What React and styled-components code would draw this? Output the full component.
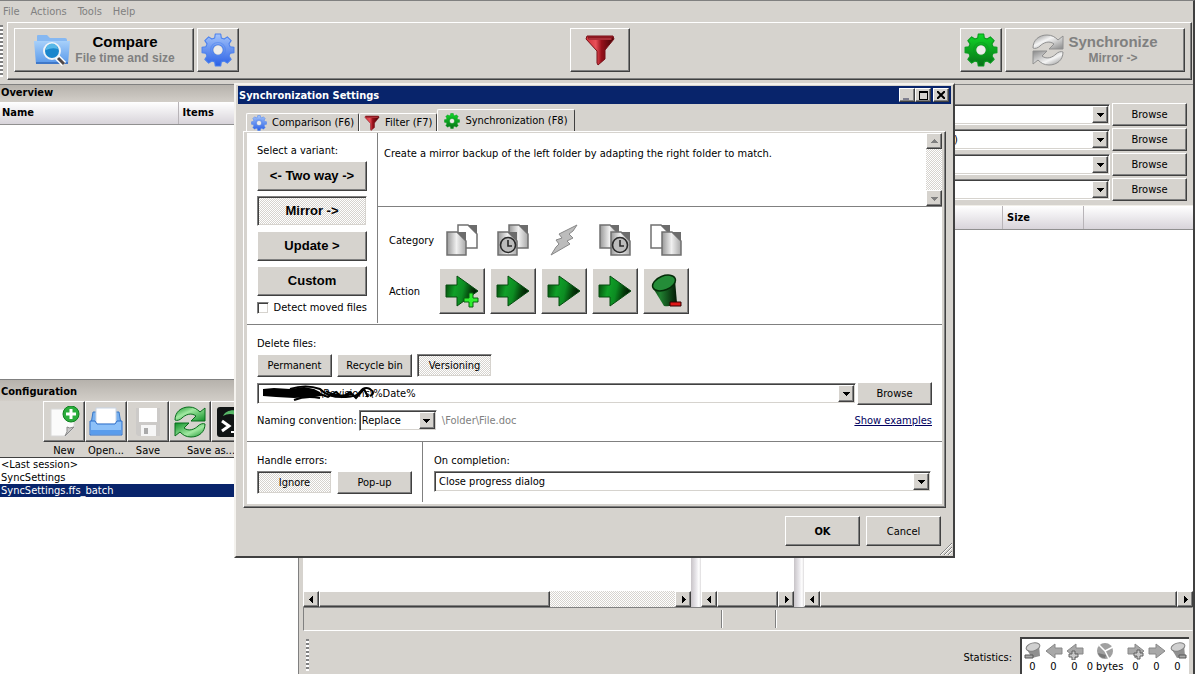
import { useId, useState } from "react";
import styled, { createGlobalStyle, css } from "styled-components";

const theme = {
  face: "#d6d3ce",
  shadow: "#808080",
  dark: "#404040",
  light: "#ffffff",
  navy: "#08246b",
  muted: "#808080",
  ui: '"DejaVu Sans Condensed", "DejaVu Sans", sans-serif',
  heading: '"Liberation Sans", Arial, sans-serif',
};

const GlobalStyle = createGlobalStyle`
  * {
    box-sizing: border-box;
  }
  body {
    margin: 0;
    overflow: hidden;
    background: ${theme.face};
    color: #000;
    font: 11px/13px ${theme.ui};
  }
  button, input, select {
    font: inherit;
    color: inherit;
  }
`;

const raised = css`
  border: 1px solid;
  border-color: ${theme.light} ${theme.dark} ${theme.dark} ${theme.light};
  box-shadow: inset -1px -1px 0 ${theme.shadow};
`;

const sunken = css`
  border: 1px solid;
  border-color: ${theme.shadow} ${theme.light} ${theme.light} ${theme.shadow};
  box-shadow: inset 1px 1px 0 ${theme.dark}, inset -1px -1px 0 ${theme.face};
`;

const checker = css`
  background: repeating-conic-gradient(#fff 0% 25%, ${theme.face} 0% 50%) 0 0 /
    2px 2px;
`;

const Window = styled.div`
  position: relative;
  display: flex;
  flex-direction: column;
  height: 100vh;
  border-top: 1px solid ${theme.shadow};
  border-right: 2px solid ${theme.dark};
`;

const MenuBar = styled.nav`
  display: flex;
  gap: 11px;
  height: 21px;
  padding: 3px;
`;

const MenuItem = styled.button`
  padding: 0;
  border: 0;
  background: none;
  color: ${theme.muted};
`;

const ToolbarRow = styled.div`
  display: flex;
  gap: 4px;
  padding-right: 1px;
`;

const Grip = styled.div`
  width: 3px;
  margin: 3px 0;
  background: repeating-linear-gradient(
    ${theme.shadow} 0 2px,
    ${theme.light} 2px 4px
  );
`;

const Toolbar = styled.div`
  flex: 1;
  display: flex;
  justify-content: space-between;
  padding: 5px 6px 7px 6px;
  ${raised}
`;

const ToolGroup = styled.div`
  display: flex;
  gap: 3px;
`;

const Button = styled.button`
  display: flex;
  align-items: center;
  justify-content: center;
  gap: 4px;
  width: ${(p) => p.$width || 75}px;
  height: ${(p) => p.$height || 23}px;
  padding: 0;
  background: ${theme.face};
  font-weight: ${(p) => (p.$bold ? "bold" : "normal")};
  ${raised}
  ${(p) =>
    p.$pressed &&
    css`
      ${checker}
      ${sunken}
    `}
`;

const VariantButton = styled(Button)`
  width: 100%;
  height: 30px;
  font: bold 13px/16px ${theme.heading};
`;

const ToolText = styled.span`
  display: flex;
  flex-direction: column;
  font: bold 12px/16px ${theme.heading};
  color: ${theme.muted};
`;

const ToolTitle = styled.span`
  font-size: 15px;
  color: ${(p) => (p.$muted ? theme.muted : "#000")};
`;

const Body = styled.div`
  flex: 1;
  display: flex;
  min-height: 0;
  padding-top: 4px;
`;

const Sidebar = styled.aside`
  display: flex;
  flex-direction: column;
  width: 299px;
  flex-shrink: 0;
  border-right: 1px solid ${theme.shadow};
`;

const Pane = styled.section`
  flex: 1;
  display: flex;
  flex-direction: column;
  border-top: 1px solid ${theme.shadow};
  background: #fff;
`;

const PaneTitle = styled.h2`
  margin: 0;
  padding: ${(p) => (p.$tall ? "5px 1px 3px" : "1px 1px 3px")};
  font-size: 11px;
  line-height: 13px;
  background: linear-gradient(#b6b2ac, #d2cec8);
`;

const headerCell = css`
  background: linear-gradient(#fff, #d8d4da);
  border-bottom: 1px solid #909090;
  font-weight: bold;
`;

const OverviewTable = styled.table`
  width: 100%;
  table-layout: fixed;
  border-collapse: collapse;
  th {
    ${headerCell}
    height: 22px;
    padding: 0 2px;
    text-align: left;
  }
  th + th {
    width: 120px;
    padding-left: 4px;
    border-left: 1px solid #b8b4b8;
  }
`;

const ConfigBar = styled.div`
  display: flex;
  padding-left: 43px;
  background: ${theme.face};
  border-bottom: 1px solid ${theme.dark};
`;

const ConfigItem = styled.div`
  display: flex;
  flex-wrap: wrap;
  justify-content: center;
  width: ${(p) => (p.$wide ? 84 : 42)}px;
`;

const ConfigLabel = styled.span`
  margin: 2px 0 0;
`;

const ConfigList = styled.ul`
  margin: 0;
  padding: 0;
  list-style: none;
`;

const ConfigEntry = styled.li`
  padding-left: 1px;
  line-height: 13px;
  color: ${(p) => (p.$selected ? "#fff" : "#000")};
  background: ${(p) => (p.$selected ? theme.navy : "transparent")};
`;

const Main = styled.main`
  flex: 1;
  display: flex;
  flex-direction: column;
  min-width: 0;
  margin-left: 4px;
  border-top: 1px solid ${theme.shadow};
`;

const FolderRows = styled.div`
  display: flex;
  flex-direction: column;
  gap: 2px;
  padding: 18px 6px 4px 501px;
  border-bottom: 1px solid #f0eee8;
`;

const FolderRow = styled.div`
  display: flex;
  align-items: center;
  gap: 2px;
`;

const Grids = styled.div`
  flex: 1;
  display: flex;
`;

const Grid = styled.div`
  display: flex;
  flex-direction: column;
  flex: ${(p) => p.$flex};
  background: #fff;
`;

const GridHeader = styled.div`
  ${headerCell}
  display: grid;
  grid-template-columns: 1fr 81px 109px;
  height: 24px;
  line-height: 23px;
`;

const GridHeaderCell = styled.div`
  padding-left: 4px;
  border-right: 1px solid #b8b4b8;
  &:last-child {
    border: 0;
  }
`;

const Splitter = styled.div`
  width: 10px;
  background: linear-gradient(90deg, #c8c4c8, #e8e6ea 50%, #fff 80%, #dcdadc);
`;

const ScrollRow = styled.div`
  display: flex;
  height: 16px;
  margin-top: auto;
  ${checker}
`;

const ScrollButton = styled.button`
  display: grid;
  place-items: center;
  width: 16px;
  height: 16px;
  padding: 0;
  background: ${theme.face};
  ${raised}
`;

const ScrollThumb = styled.div`
  width: ${(p) => p.$width};
  background: ${theme.face};
  ${raised}
`;

const ScrollTrack = styled.div`
  flex: 1;
  display: flex;
`;

const StatusBar = styled.div`
  display: grid;
  grid-template-columns: 418px 54px 1fr;
  height: 24px;
  padding: 2px 0;
  border: 1px solid;
  border-color: ${theme.shadow} ${theme.face} ${theme.light} ${theme.shadow};
`;

const StatusCell = styled.div`
  border-right: 1px solid ${theme.shadow};
  box-shadow: 1px 0 0 #fff;
  &:last-child {
    border: 0;
    box-shadow: none;
  }
`;

const BottomBar = styled.div`
  display: flex;
  height: 43px;
  padding: 5px 3px 0;
`;

const StatsLabel = styled.span`
  margin: 15px 7px 0 auto;
`;

const Stats = styled.div`
  display: flex;
  padding: 5px 1px 0 2px;
  background: #fff;
  border: 1px solid ${theme.face};
  border-bottom: 0;
  box-shadow: inset 2px 2px 0 ${theme.dark};
`;

const Stat = styled.div`
  display: flex;
  flex-direction: column;
  align-items: center;
  width: ${(p) => (p.$wide ? 40 : 21)}px;
  white-space: nowrap;
`;

const Dialog = styled.div`
  position: absolute;
  top: 82px;
  left: 234px;
  right: 238px;
  padding: 1px 2px 10px;
  background: ${theme.face};
  border: 2px solid;
  border-color: #f4f2ee ${theme.dark} ${theme.dark} #f4f2ee;
`;

const TitleBar = styled.header`
  display: flex;
  align-items: center;
  height: 18px;
  padding: 0 2px 0 1px;
  color: #fff;
  background: ${theme.navy};
`;

const DialogTitle = styled.h1`
  flex: 1;
  margin: 0;
  font-size: 11px;
  line-height: 13px;
`;

const CaptionButton = styled(ScrollButton)`
  height: 14px;
  &:last-child {
    margin-left: 2px;
  }
`;

const Tabs = styled.div`
  display: flex;
  align-items: flex-end;
  height: 22px;
  margin: 5px 5px 0;
  padding-left: 3px;
`;

const Tab = styled.button`
  display: flex;
  align-items: center;
  gap: 5px;
  height: ${(p) => (p.$selected ? 22 : 18)}px;
  padding: 0 ${(p) => (p.$selected ? 6 : 4)}px;
  background: ${theme.face};
  border: 1px solid;
  border-color: ${theme.light} ${theme.dark} transparent ${theme.light};
  border-bottom: 0;
  border-radius: 2px 2px 0 0;
`;

const TabPanel = styled.div`
  margin: 0 5px;
  padding: 1px 3px 3px;
  ${raised}
`;

const PanelSurface = styled.div`
  background: #fff;
`;

const VariantSection = styled.section`
  display: flex;
  padding-bottom: 1px;
  border-bottom: 1px solid ${theme.shadow};
`;

const VariantColumn = styled.div`
  width: 131px;
  padding: 11px 10px 9px;
  border-right: 1px solid ${theme.shadow};
`;

const VariantList = styled.div`
  display: flex;
  flex-direction: column;
  gap: 5px;
  margin: 4px 0 5px;
`;

const CheckLabel = styled.label`
  display: flex;
  align-items: center;
  gap: 5px;
  white-space: nowrap;
`;

const Checkbox = styled.input`
  appearance: none;
  width: 12px;
  height: 12px;
  margin: 0;
  background: #fff;
  ${sunken}
  &:checked {
    background: #000;
  }
`;

const RuleColumn = styled.div`
  flex: 1;
`;

const Description = styled.div`
  display: flex;
  justify-content: space-between;
  height: 74px;
  padding-left: 6px;
  border-bottom: 1px solid ${theme.shadow};
  p {
    margin: 14px 0 0;
  }
`;

const VerticalScroll = styled.div`
  display: flex;
  flex-direction: column;
  justify-content: space-between;
  color: ${theme.shadow};
  ${checker}
`;

const RuleGrid = styled.div`
  display: grid;
  grid-template-columns: 45px repeat(5, 46px);
  grid-template-rows: 32px 46px;
  gap: 12px 5px;
  align-items: center;
  justify-items: center;
  padding: 17px 11px 0;
`;

const RuleLabel = styled.span`
  justify-self: start;
`;

const DeleteSection = styled.section`
  padding: 12px 10px 10px;
  border-bottom: 1px solid ${theme.shadow};
`;

const ButtonRow = styled.div`
  display: flex;
  gap: 5px;
  margin-top: 4px;
`;

const PathRow = styled.div`
  display: flex;
  align-items: center;
  gap: 1px;
  margin: 5px 0;
`;

const NamingRow = styled.div`
  display: flex;
  align-items: center;
  gap: 2px;
`;

const SamplePath = styled.span`
  margin-left: 3px;
  color: ${theme.muted};
`;

const Link = styled.a`
  margin-left: auto;
  color: #000060;
`;

const FinishSection = styled.section`
  display: flex;
`;

const ErrorColumn = styled.div`
  width: 176px;
  padding: 12px 10px 8px;
  border-right: 1px solid ${theme.shadow};
  margin-bottom: 2px;
`;

const CompletionColumn = styled.div`
  flex: 1;
  display: flex;
  flex-direction: column;
  gap: 4px;
  padding: 12px 11px 0;
`;

const DialogFooter = styled.footer`
  display: flex;
  justify-content: flex-end;
  gap: 6px;
  padding: 8px 10px 0;
`;

const ResizeGrip = styled.svg`
  position: absolute;
  right: 1px;
  bottom: 1px;
`;

const ComboFrame = styled.div`
  position: relative;
  display: flex;
  flex: ${(p) => (p.$width ? "none" : 1)};
  width: ${(p) => (p.$width ? `${p.$width}px` : "auto")};
  height: 21px;
  padding: 1px;
  background: #fff;
  ${sunken}
`;

const ComboInput = styled.input`
  flex: 1;
  min-width: 0;
  padding: 0 0 0 ${(p) => p.$indent || 2}px;
  border: 0;
  outline: 0;
  background: none;
`;

const ComboSelect = styled.select`
  flex: 1;
  min-width: 0;
  margin-right: -16px;
  padding: 0 16px 0 ${(p) => p.$indent || 1}px;
  border: 0;
  outline: 0;
  appearance: none;
  background: none;
`;

const ComboArrow = styled.span`
  display: grid;
  place-items: center;
  width: 16px;
  background: ${theme.face};
  pointer-events: none;
  ${raised}
`;

const Scribble = styled.svg`
  position: absolute;
  left: 4px;
  top: 0;
  pointer-events: none;
`;

const arrowPaths = {
  down: "M0 2h7L3.5 6z",
  up: "M0 5h7L3.5 1z",
  left: "M5 0v7L1 3.5z",
  right: "M2 0v7L6 3.5z",
};

const Arrow = ({ dir }) => (
  <svg width="7" height="7" fill="currentColor" shapeRendering="crispEdges">
    <path d={arrowPaths[dir]} />
  </svg>
);

const Combo = ({ label, value, indent, children }) => (
  <ComboFrame>
    <ComboInput aria-label={label} defaultValue={value} $indent={indent} />
    {children}
    <ComboArrow>
      <Arrow dir="down" />
    </ComboArrow>
  </ComboFrame>
);

const Select = ({ id, options, width, indent }) => (
  <ComboFrame $width={width}>
    <ComboSelect id={id} $indent={indent}>
      {options.map((option) => (
        <option key={option}>{option}</option>
      ))}
    </ComboSelect>
    <ComboArrow>
      <Arrow dir="down" />
    </ComboArrow>
  </ComboFrame>
);

const gearPoints = () => {
  const points = [];
  for (let i = 0; i < 8; i++) {
    const mid = (i * Math.PI) / 4;
    [
      [-0.27, 11.8],
      [-0.17, 15.2],
      [0.17, 15.2],
      [0.27, 11.8],
    ].forEach(([turn, radius]) => {
      const x = 16 + radius * Math.sin(mid + turn);
      const y = 16 - radius * Math.cos(mid + turn);
      points.push(`${x.toFixed(1)} ${y.toFixed(1)}`);
    });
  }
  return `M${points.join("L")}Z`;
};

const GearIcon = ({ size, from, to, edge }) => {
  const id = useId();
  return (
    <svg width={size} height={size} viewBox="0 0 32 32">
      <linearGradient id={id} x1="0" y1="0" x2="0" y2="1">
        <stop offset="0" stopColor={from} />
        <stop offset="1" stopColor={to} />
      </linearGradient>
      <path
        d={`${gearPoints()}M16 11a5 5 0 1 0 0 10a5 5 0 1 0 0-10z`}
        fill={`url(#${id})`}
        fillRule="evenodd"
        stroke={edge}
        strokeWidth="1"
        strokeLinejoin="round"
      />
      <circle cx="16" cy="16" r="7" fill="none" stroke={edge} opacity="0.5" />
      <circle cx="16" cy="16" r="4" fill="#f2f2f2" opacity="0.8" />
    </svg>
  );
};

const BlueGear = ({ size }) => (
  <GearIcon size={size} from="#a4c4fa" to="#2a60e6" edge="#4a80ee" />
);

const GreenGear = ({ size }) => (
  <GearIcon size={size} from="#10d828" to="#087018" edge="#079a1c" />
);

const FunnelIcon = ({ size }) => {
  const id = useId();
  return (
    <svg width={size} height={size} viewBox="0 0 32 32">
      <linearGradient id={id}>
        <stop offset="0" stopColor="#d03038" />
        <stop offset="0.35" stopColor="#e85058" />
        <stop offset="0.55" stopColor="#98101a" />
        <stop offset="1" stopColor="#400306" />
      </linearGradient>
      <path
        d="M3 2H29L30 5L21 16V25L14 31L13 29V17L2 5z"
        fill={`url(#${id})`}
        stroke="#781018"
      />
      <path d="M3 2H29L28 6H5z" fill="#8c1820" />
      <path d="M5 5H27" stroke="#c84850" />
    </svg>
  );
};

const FolderSearchIcon = () => (
  <svg width="38" height="32" viewBox="0 0 38 32">
    <linearGradient id="folder" x2="0" y2="1">
      <stop stopColor="#a8d0fa" />
      <stop offset="1" stopColor="#5898ea" />
    </linearGradient>
    <path d="M4 10V2q0-1 1-1h9l3 3h15q2 0 2 2v4z" fill="#86b8f2" />
    <path d="M1 7h36l-2 23H3z" fill="url(#folder)" />
    <path d="M3 29h32" stroke="#4078c8" strokeWidth="2" />
    <path d="M24 23l7 7" stroke="#fff" strokeWidth="6" />
    <path d="M25 24l6 6" stroke="#504848" strokeWidth="3" />
    <circle cx="19" cy="17" r="8" fill="#1a86cc" stroke="#f0f4f8" strokeWidth="2" />
    <path d="M13 16a6 6 0 0 1 12-1q-6-2-12 1z" fill="#58b8e8" />
  </svg>
);

const CycleIcon = ({ from, to, edge, size }) => {
  const id = useId();
  const half =
    "M1 14C1 6 7 1 15 1C20 1 23 3 26 6L31 2V15H17L22 10C17 6 11 9 8 12C6 14 3 15 1 14z";
  return (
    <svg width={size} height={size} viewBox="0 0 32 32">
      <linearGradient id={id} x2="1" y2="1">
        <stop stopColor={to} />
        <stop offset="0.4" stopColor={from} />
        <stop offset="1" stopColor={to} />
      </linearGradient>
      <g fill={`url(#${id})`} stroke={edge}>
        <path d={half} />
        <path d={half} transform="rotate(180 16 16)" />
      </g>
    </svg>
  );
};

const NewIcon = () => (
  <svg width="32" height="32" viewBox="0 0 32 32">
    <path d="M3 3h23v19l-8 8H3z" fill="#fbfbfb" stroke="#d8d8d8" />
    <path d="M26 21q-5 2-7 0q1 5-2 9z" fill="#c8c8c8" stroke="#888" />
    <circle cx="23" cy="8" r="8" fill="#2aae3c" stroke="#108020" />
    <path d="M23 3v10M18 8h10" stroke="#fff" strokeWidth="3" />
  </svg>
);

const OpenIcon = () => (
  <svg width="34" height="32" viewBox="0 0 34 32">
    <path d="M4 6h26l2 12H2z" fill="#78b0ee" stroke="#3878c8" />
    <path d="M7 2h20v16H7z" fill="#fff" stroke="#c8d4e4" />
    <path d="M1 15h5l2 3h18l2-3h5v14H1z" fill="#8cc0f8" stroke="#2e70cc" />
    <path d="M2 24h30v4H2z" fill="#5a9cec" />
  </svg>
);

const SaveIcon = () => (
  <svg width="32" height="32" viewBox="0 0 32 32">
    <path d="M4 2h24v28H6l-2-2z" fill="#cccac8" />
    <path d="M7 2h18v14H7z" fill="#fff" />
    <path d="M9 19h15v11H9z" fill="#f6f6f6" />
    <path d="M12 22h4v6h-4z" fill="#aaa" />
  </svg>
);

const BatchIcon = () => (
  <svg width="32" height="32" viewBox="0 0 32 32">
    <rect x="1" y="1" width="30" height="30" rx="3" fill="#101414" />
    <path d="M7 10C10 3 22 2 28 9L25 12C18 7 12 7 7 10z" fill="#58b868" />
    <path d="M6 15l7 5l-7 5" fill="none" stroke="#fff" strokeWidth="3" />
    <path d="M15 26h9" stroke="#fff" strokeWidth="2" />
  </svg>
);

const Sheet = ({ x, y, fill }) => (
  <g transform={`translate(${x} ${y})`}>
    <path d="M1 1h19v23H1z" fill="#8c8c8c" />
    <path d="M1 1h10l9 9v14H1z" fill={fill} stroke="#707070" strokeWidth="1.5" />
    <path d="M11 1h9v9z" fill="#6c6c6c" />
  </g>
);

// flip puts the highlighted sheet on the right
const SheetsIcon = ({ flip, clock }) => {
  const id = useId();
  const shade = `url(#${id})`;
  return (
    <svg width="32" height="32" viewBox="0 0 32 32">
      <linearGradient id={id}>
        <stop stopColor="#989898" />
        <stop offset="0.5" stopColor="#f0f0f0" />
        <stop offset="1" stopColor="#a8a8a8" />
      </linearGradient>
      <Sheet x={flip ? 0 : 11} y={0} fill={clock ? shade : "#fff"} />
      <Sheet x={flip ? 11 : 0} y={7} fill={shade} />
      {clock && (
        <g
          transform={flip ? "translate(21 21)" : "translate(11 21)"}
          fill="none"
          stroke="#282828"
          strokeWidth="1.6"
        >
          <circle r="7.5" fill="#bcbcbc" />
          <path d="M0-5V1H4" />
        </g>
      )}
    </svg>
  );
};

const BoltIcon = () => (
  <svg width="28" height="32" viewBox="0 0 28 32">
    <path
      d="M27 1L9 10l3 4l-6 2l3 4l-3 3L1 31l19-11l-3-3l6-3l-4-4l4-3z"
      fill="#bcbcbc"
      stroke="#888"
    />
  </svg>
);

const ArrowIcon = ({ plus }) => {
  const id = useId();
  return (
    <svg width="34" height="34" viewBox="0 0 34 34">
      <linearGradient id={id} x2="1" y2="0.2">
        <stop stopColor="#034008" />
        <stop offset="0.35" stopColor="#10a028" />
        <stop offset="0.6" stopColor="#0c8c22" />
        <stop offset="0.85" stopColor="#043c0a" />
        <stop offset="1" stopColor="#021c04" />
      </linearGradient>
      <path
        d="M1 11H12V2L33 17L12 32V23H1z"
        fill={`url(#${id})`}
        stroke="#064c10"
      />
      {plus && (
        <path
          d="M24 19h4v5h5v4h-5v5h-4v-5h-5v-4h5z"
          fill="#30f030"
          stroke="#086010"
        />
      )}
    </svg>
  );
};

const BinIcon = () => (
  <svg width="32" height="34" viewBox="0 0 32 34">
    <linearGradient id="bin">
      <stop stopColor="#0a4010" />
      <stop offset="0.3" stopColor="#208030" />
      <stop offset="1" stopColor="#021804" />
    </linearGradient>
    <path d="M3 14L14 32Q22 33 27 29L25 6z" fill="url(#bin)" />
    <ellipse
      cx="14"
      cy="9"
      rx="12"
      ry="7"
      transform="rotate(-22 14 9)"
      fill="#248c38"
      stroke="#042c08"
      strokeWidth="1.5"
    />
    <path d="M20 28h11v4H20z" fill="#e01818" stroke="#300" />
  </svg>
);

const SmallArrow = ({ flip, plus }) => (
  <svg width="18" height="18" viewBox="0 0 18 18">
    <path
      d="M1 6h7V2l9 7l-9 7v-4H1z"
      fill="#a8a8a8"
      stroke="#888"
      transform={flip ? "rotate(180 9 9)" : undefined}
    />
    {plus && (
      <path
        d="M6 9h3v3h3v3H9v3H6v-3H3v-3h3z"
        fill="#c8c8c8"
        stroke="#606060"
        transform={flip ? undefined : "translate(4 -1)"}
      />
    )}
  </svg>
);

const SmallBin = ({ flip }) => (
  <svg width="18" height="18" viewBox="0 0 18 18">
    <path d="M2 6L8 16L16 14L15 3z" fill="#909090" />
    <ellipse
      cx="9"
      cy="5"
      rx="7"
      ry="4"
      fill="#d0d0d0"
      stroke="#808080"
      transform="rotate(-15 9 5)"
    />
    <path
      d={flip ? "M10 13h7v3h-7z" : "M1 13h8v3H1z"}
      fill="#a8a8a8"
      stroke="#585858"
    />
  </svg>
);

const BytesIcon = () => (
  <svg width="18" height="18" viewBox="0 0 18 18">
    <circle cx="9" cy="9" r="8" fill="#a0a0a0" />
    <path d="M9 9L3 3M9 9L17 5M9 9L13 17" stroke="#fff" strokeWidth="1.5" />
    <path d="M2 11q1 5 7 5l1-3z" fill="#787878" />
  </svg>
);

const HorizontalScroll = ({ thumb }) => (
  <ScrollRow>
    <ScrollButton aria-label="Scroll left">
      <Arrow dir="left" />
    </ScrollButton>
    <ScrollTrack>
      <ScrollThumb $width={thumb} />
    </ScrollTrack>
    <ScrollButton aria-label="Scroll right">
      <Arrow dir="right" />
    </ScrollButton>
  </ScrollRow>
);

const stats = [
  { icon: <SmallBin />, text: "0" },
  { icon: <SmallArrow flip />, text: "0" },
  { icon: <SmallArrow flip plus />, text: "0" },
  { icon: <BytesIcon />, text: "0 bytes", wide: true },
  { icon: <SmallArrow plus />, text: "0" },
  { icon: <SmallArrow />, text: "0" },
  { icon: <SmallBin flip />, text: "0" },
];

const configItems = [
  { label: "New", icons: [<NewIcon key="new" />] },
  { label: "Open...", icons: [<OpenIcon key="open" />] },
  { label: "Save", icons: [<SaveIcon key="save" />] },
  {
    label: "Save as...",
    wide: true,
    icons: [
      <CycleIcon
        key="sync"
        size={32}
        from="#a0e8a0"
        to="#109028"
        edge="#086c1c"
      />,
      <BatchIcon key="batch" />,
    ],
  },
];

const variants = ["<- Two way ->", "Mirror ->", "Update >", "Custom"];
const deletionModes = ["Permanent", "Recycle bin", "Versioning"];
const errorModes = ["Ignore", "Pop-up"];
const actions = [
  { name: "Copy new item to right", icon: <ArrowIcon plus /> },
  { name: "Newer left to right", icon: <ArrowIcon /> },
  { name: "Conflict to right", icon: <ArrowIcon /> },
  { name: "Newer right overwritten", icon: <ArrowIcon /> },
  { name: "Delete right item", icon: <BinIcon /> },
];

const SettingsDialog = () => {
  const [variant, setVariant] = useState("Mirror ->");
  const [deletion, setDeletion] = useState("Versioning");
  const [errors, setErrors] = useState("Ignore");

  return (
    <Dialog role="dialog" aria-labelledby="dialog-title">
      <TitleBar>
        <DialogTitle id="dialog-title">Synchronization Settings</DialogTitle>
        <CaptionButton aria-label="Minimize">
          <svg width="10" height="9">
            <path d="M1 8h6" stroke="#808090" strokeWidth="2" />
          </svg>
        </CaptionButton>
        <CaptionButton aria-label="Maximize">
          <svg width="9" height="9" shapeRendering="crispEdges">
            <path d="M0 0h9v9H0zM1 2v6h7V2z" fillRule="evenodd" />
          </svg>
        </CaptionButton>
        <CaptionButton aria-label="Close">
          <svg width="8" height="8">
            <path d="M0 0l8 8M8 0l-8 8" stroke="#000" strokeWidth="2" />
          </svg>
        </CaptionButton>
      </TitleBar>
      <Tabs role="tablist">
        <Tab role="tab">
          <BlueGear size={16} />
          Comparison (F6)
        </Tab>
        <Tab role="tab">
          <FunnelIcon size={16} />
          Filter (F7)
        </Tab>
        <Tab role="tab" aria-selected="true" $selected>
          <GreenGear size={16} />
          Synchronization (F8)
        </Tab>
      </Tabs>
      <TabPanel>
        <PanelSurface>
          <VariantSection>
            <VariantColumn>
              <div>Select a variant:</div>
              <VariantList>
                {variants.map((name) => (
                  <VariantButton
                    key={name}
                    $pressed={name === variant}
                    onClick={() => setVariant(name)}
                  >
                    {name}
                  </VariantButton>
                ))}
              </VariantList>
              <CheckLabel>
                <Checkbox type="checkbox" />
                Detect moved files
              </CheckLabel>
            </VariantColumn>
            <RuleColumn>
              <Description>
                <p>
                  Create a mirror backup of the left folder by adapting the
                  right folder to match.
                </p>
                <VerticalScroll>
                  <ScrollButton aria-label="Scroll up">
                    <Arrow dir="up" />
                  </ScrollButton>
                  <ScrollButton aria-label="Scroll down">
                    <Arrow dir="down" />
                  </ScrollButton>
                </VerticalScroll>
              </Description>
              <RuleGrid>
                <RuleLabel>Category</RuleLabel>
                <SheetsIcon />
                <SheetsIcon clock />
                <BoltIcon />
                <SheetsIcon flip clock />
                <SheetsIcon flip />
                <RuleLabel>Action</RuleLabel>
                {actions.map(({ name, icon }) => (
                  <Button key={name} aria-label={name} $width={46} $height={46}>
                    {icon}
                  </Button>
                ))}
              </RuleGrid>
            </RuleColumn>
          </VariantSection>
          <DeleteSection>
            <div>Delete files:</div>
            <ButtonRow>
              {deletionModes.map((name) => (
                <Button
                  key={name}
                  $pressed={name === deletion}
                  onClick={() => setDeletion(name)}
                >
                  {name}
                </Button>
              ))}
            </ButtonRow>
            <PathRow>
              <Combo
                label="Versioning folder"
                value="\Revisions\%Date%"
                indent={61}
              >
                <Scribble width="114" height="18" viewBox="0 0 114 18">
                  <path
                    d="M1 5L12 4L28 5L42 3L52 5L58 8L60 12L48 13L32 14L14 13L1 12z"
                    fill="#000"
                  />
                  <path
                    d="M32 16Q44 11 58 14M28 5Q44 0 58 5Q66 14 84 13Q94 13 98 8Q102 2 108 5Q114 9 108 12M58 10L66 13L74 8L80 13L88 8L94 14L102 5L106 13M64 7Q76 14 90 10"
                    fill="none"
                    stroke="#000"
                    strokeWidth="2"
                  />
                </Scribble>
              </Combo>
              <Button>Browse</Button>
            </PathRow>
            <NamingRow>
              <label htmlFor="naming">Naming convention:</label>
              <Select
                id="naming"
                width={78}
                options={["Replace", "Time stamp"]}
              />
              <SamplePath>\Folder\File.doc</SamplePath>
              <Link href="#examples">Show examples</Link>
            </NamingRow>
          </DeleteSection>
          <FinishSection>
            <ErrorColumn>
              <div>Handle errors:</div>
              <ButtonRow>
                {errorModes.map((name) => (
                  <Button
                    key={name}
                    $pressed={name === errors}
                    onClick={() => setErrors(name)}
                  >
                    {name}
                  </Button>
                ))}
              </ButtonRow>
            </ErrorColumn>
            <CompletionColumn>
              <label htmlFor="completion">On completion:</label>
              <div>
                <Select
                  id="completion"
                  indent={3}
                  options={["Close progress dialog", "Shut down"]}
                />
              </div>
            </CompletionColumn>
          </FinishSection>
        </PanelSurface>
      </TabPanel>
      <DialogFooter>
        <Button $height={30} $bold>
          OK
        </Button>
        <Button $height={30}>Cancel</Button>
      </DialogFooter>
      <ResizeGrip width="13" height="13">
        <path d="M1 13L13 1M5 13L13 5M9 13L13 9" stroke="#808080" />
        <path d="M2 13L13 2M6 13L13 6M10 13L13 10" stroke="#fff" />
      </ResizeGrip>
    </Dialog>
  );
};

export default function App() {
  return (
    <>
      <GlobalStyle />
      <Window>
        <MenuBar>
          {["File", "Actions", "Tools", "Help"].map((name) => (
            <MenuItem key={name}>{name}</MenuItem>
          ))}
        </MenuBar>
        <ToolbarRow>
          <Grip />
          <Toolbar>
            <ToolGroup>
              <Button $width={180} $height={44}>
                <FolderSearchIcon />
                <ToolText>
                  <ToolTitle>Compare</ToolTitle>
                  File time and size
                </ToolText>
              </Button>
              <Button $width={42} $height={44} aria-label="Compare settings">
                <BlueGear size={34} />
              </Button>
            </ToolGroup>
            <Button $width={60} $height={44} aria-label="Filter">
              <FunnelIcon size={32} />
            </Button>
            <ToolGroup>
              <Button $width={42} $height={44} aria-label="Sync settings">
                <GreenGear size={34} />
              </Button>
              <Button $width={180} $height={44}>
                <CycleIcon size={32} from="#f4f4f4" to="#888888" edge="#909090" />
                <ToolText>
                  <ToolTitle $muted>Synchronize</ToolTitle>
                  Mirror -&gt;
                </ToolText>
              </Button>
            </ToolGroup>
          </Toolbar>
        </ToolbarRow>
        <Body>
          <Sidebar>
            <Pane>
              <PaneTitle>Overview</PaneTitle>
              <OverviewTable>
                <thead>
                  <tr>
                    <th>Name</th>
                    <th>Items</th>
                  </tr>
                </thead>
              </OverviewTable>
            </Pane>
            <Pane>
              <PaneTitle $tall>Configuration</PaneTitle>
              <ConfigBar>
                {configItems.map(({ label, icons, wide }) => (
                  <ConfigItem key={label} $wide={wide}>
                    {icons.map((icon) => (
                      <Button
                        key={icon.key}
                        $width={42}
                        $height={41}
                        aria-label={`${label} ${icon.key}`}
                      >
                        {icon}
                      </Button>
                    ))}
                    <ConfigLabel>{label}</ConfigLabel>
                  </ConfigItem>
                ))}
              </ConfigBar>
              <ConfigList>
                <ConfigEntry>&lt;Last session&gt;</ConfigEntry>
                <ConfigEntry>SyncSettings</ConfigEntry>
                <ConfigEntry $selected>SyncSettings.ffs_batch</ConfigEntry>
              </ConfigList>
            </Pane>
          </Sidebar>
          <Main>
            <FolderRows>
              {["", ")", "", ""].map((value, index) => (
                <FolderRow key={index}>
                  <Combo
                    label={`Right folder ${index + 1}`}
                    value={value}
                    indent={148}
                  />
                  <Button>Browse</Button>
                </FolderRow>
              ))}
            </FolderRows>
            <GridHeader>
              <GridHeaderCell />
              <GridHeaderCell>Size</GridHeaderCell>
              <GridHeaderCell />
            </GridHeader>
            <Grids>
              <Grid $flex="388 1 0">
                <HorizontalScroll thumb="65%" />
              </Grid>
              <Splitter />
              <Grid $flex="93 1 0">
                <HorizontalScroll thumb="100%" />
              </Grid>
              <Splitter />
              <Grid $flex="389 1 0">
                <HorizontalScroll thumb="100%" />
              </Grid>
            </Grids>
            <StatusBar>
              <StatusCell />
              <StatusCell />
              <StatusCell />
            </StatusBar>
            <BottomBar>
              <Grip />
              <StatsLabel>Statistics:</StatsLabel>
              <Stats>
                {stats.map(({ icon, text, wide }, index) => (
                  <Stat key={index} $wide={wide}>
                    {icon}
                    {text}
                  </Stat>
                ))}
              </Stats>
            </BottomBar>
          </Main>
        </Body>
        <SettingsDialog />
      </Window>
    </>
  );
}
